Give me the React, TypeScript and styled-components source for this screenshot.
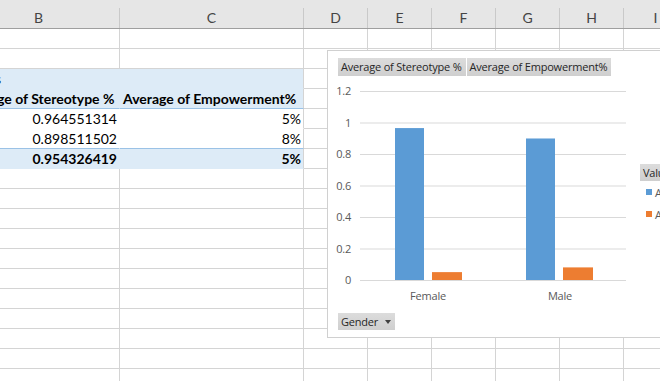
import React from 'react';
import styled, { createGlobalStyle } from 'styled-components';

const GlobalStyle = createGlobalStyle`
  html, body {
    margin: 0;
    padding: 0;
    background: #ffffff;
    overflow: hidden;
  }
  body {
    width: 660px;
    height: 381px;
  }
`;

const GRID = '#d4d4d4';
const PIVOT_BG = '#ddebf7';
const PIVOT_LINE = '#9bc2e6';
const BLUE = '#5b9bd5';
const ORANGE = '#ed7d31';

const columns = [
  { key: 'B', w: 162 },
  { key: 'C', w: 184 },
  { key: 'D', w: 64 },
  { key: 'E', w: 64 },
  { key: 'F', w: 64 },
  { key: 'G', w: 64 },
  { key: 'H', w: 64 },
  { key: 'I', w: 64 },
];

type PivotRow = {
  kind: 'label' | 'head' | 'item' | 'total';
  b: string;
  c: string;
  last?: boolean;
};

const pivot: PivotRow[] = [
  { kind: 'label', b: 'Values', c: '' },
  { kind: 'head', b: 'Average of Stereotype %', c: 'Average of Empowerment%' },
  { kind: 'item', b: '0.964551314', c: '5%' },
  { kind: 'item', b: '0.898511502', c: '8%', last: true },
  { kind: 'total', b: '0.954326419', c: '5%' },
];

const series = [
  { name: 'Average of Stereotype %', color: BLUE },
  { name: 'Average of Empowerment%', color: ORANGE },
];

const categories = [
  { label: 'Female', center: 90, bars: [{ x: 57, w: 29, v: 0.964551314 }, { x: 94, w: 30, v: 0.05 }] },
  { label: 'Male', center: 222, bars: [{ x: 188, w: 29, v: 0.898511502 }, { x: 225, w: 30, v: 0.08 }] },
];

const Page = styled.div`
  position: relative;
  width: 660px;
  height: 381px;
  overflow: hidden;
  font-family: 'Lato', 'Liberation Sans', sans-serif;
`;

const Sheet = styled.div`
  margin-left: -42px;
  width: 760px;
`;

const HeaderBar = styled.div`
  display: flex;
  height: 29px;
  box-sizing: border-box;
  padding-top: 8px;
  background: #e6e6e6;
  border-bottom: 1px solid #9f9f9f;
`;

const ColHead = styled.div<{ $w: number }>`
  flex: 0 0 ${(p) => p.$w}px;
  box-sizing: border-box;
  height: 20px;
  line-height: 20px;
  text-align: center;
  border-right: 1px solid #c9c9c9;
  color: #444444;
  font-size: 14px;
`;

const Row = styled.div`
  display: flex;
`;

const Cell = styled.div<{
  $w: number;
  $bg: string;
  $right: string;
  $bottom: string;
  $align: string;
  $bold?: boolean;
}>`
  flex: 0 0 ${(p) => p.$w}px;
  height: 20px;
  box-sizing: border-box;
  background: ${(p) => p.$bg};
  border-right: 1px solid ${(p) => p.$right};
  border-bottom: 1px solid ${(p) => p.$bottom};
  display: flex;
  align-items: center;
  justify-content: ${(p) => p.$align};
  padding: 0 2px 0 3px;
  font-size: 14px;
  font-weight: ${(p) => (p.$bold ? 700 : 400)};
  color: #000000;
  white-space: nowrap;
  overflow: hidden;
`;

const Chart = styled.div`
  position: absolute;
  left: 327px;
  top: 50px;
  width: 360px;
  height: 288px;
  box-sizing: border-box;
  background: #ffffff;
  border: 1px solid #d0d0d0;
  padding: 7px 0 7px 10px;
  display: flex;
  flex-direction: column;
  font-family: 'Open Sans', 'Liberation Sans', sans-serif;
`;

const FieldRow = styled.div`
  display: flex;
  gap: 1px;
`;

const FieldButton = styled.div<{ $h?: number }>`
  height: ${(p) => p.$h ?? 18}px;
  line-height: ${(p) => p.$h ?? 18}px;
  padding: 0 4px 0 3px;
  background: linear-gradient(#dcdcdc, #cfcfcf);
  color: #262626;
  font-size: 11px;
  letter-spacing: -0.2px;
  white-space: nowrap;
  display: flex;
  align-items: center;
  gap: 7px;
`;

const Caret = styled.span`
  width: 0;
  height: 0;
  border-left: 3.5px solid transparent;
  border-right: 3.5px solid transparent;
  border-top: 4px solid #404040;
  margin-top: 1px;
`;

const Body = styled.div`
  display: flex;
  height: 232px;
`;

const Plot = styled.svg`
  flex: 0 0 296px;
  overflow: visible;
  font-family: 'Open Sans', 'Liberation Sans', sans-serif;
  font-size: 11px;
  letter-spacing: -0.2px;
`;

const Legend = styled.div`
  padding: 88px 0 0 6px;
  display: flex;
  flex-direction: column;
  align-items: flex-start;
`;

const LegendItem = styled.div`
  height: 22px;
  display: flex;
  align-items: center;
  gap: 3px;
  padding-left: 6px;
  color: #595959;
  font-size: 11px;
  white-space: nowrap;
`;

const Swatch = styled.span<{ $c: string }>`
  width: 6px;
  height: 6px;
  background: ${(p) => p.$c};
`;

const FooterRow = styled.div`
  margin-top: 5px;
  display: flex;
`;

function pivotCells(p: PivotRow) {
  const bg = p.kind === 'label' || p.kind === 'head' || p.kind === 'total' ? PIVOT_BG : '#ffffff';
  const bottom = p.kind === 'head' || p.last ? PIVOT_LINE : bg;
  const bold = p.kind === 'head' || p.kind === 'total';
  const numeric = p.kind === 'item' || p.kind === 'total';
  return [
    { text: p.b, bg, right: bg, bottom, bold, align: numeric ? 'flex-end' : 'flex-start' },
    { text: p.c, bg, right: GRID, bottom, bold, align: numeric ? 'flex-end' : 'flex-start' },
  ];
}

const ROWS = 18;
const PIVOT_START = 2;
const Y0 = 204;
const SCALE = 157.5;

const App: React.FC = () => {
  const rows = Array.from({ length: ROWS }, (_, r) => {
    const p = r >= PIVOT_START && r < PIVOT_START + pivot.length ? pivot[r - PIVOT_START] : null;
    const special = p ? pivotCells(p) : [];
    return columns.map((col, i) => {
      const s = special[i];
      return s ? (
        <Cell key={col.key} $w={col.w} $bg={s.bg} $right={s.right} $bottom={s.bottom} $align={s.align} $bold={s.bold}>
          {s.text}
        </Cell>
      ) : (
        <Cell key={col.key} $w={col.w} $bg="#ffffff" $right={GRID} $bottom={GRID} $align="flex-start" />
      );
    });
  });

  const ticks = [0, 0.2, 0.4, 0.6, 0.8, 1, 1.2];

  return (
    <Page>
      <GlobalStyle />
      <Sheet>
        <HeaderBar>
          {columns.map((c) => (
            <ColHead key={c.key} $w={c.w}>
              {c.key}
            </ColHead>
          ))}
        </HeaderBar>
        {rows.map((cells, r) => (
          <Row key={r}>{cells}</Row>
        ))}
      </Sheet>

      <Chart>
        <FieldRow>
          {series.map((s) => (
            <FieldButton key={s.name}>{s.name}</FieldButton>
          ))}
        </FieldRow>
        <Body>
          <Plot width={296} height={232} viewBox="0 0 296 232">
            {ticks.map((t) => {
              const y = Y0 - t * SCALE;
              return (
                <g key={t}>
                  <line x1={22} x2={288} y1={y + 0.5} y2={y + 0.5} stroke="#d9d9d9" strokeWidth={1} />
                  <text x={13} y={y + 4} textAnchor="end" fill="#595959">
                    {Number(t.toFixed(1)).toString()}
                  </text>
                </g>
              );
            })}
            {categories.map((c) => (
              <g key={c.label}>
                {c.bars.map((b, i) => (
                  <rect
                    key={i}
                    x={b.x}
                    y={Y0 - b.v * SCALE}
                    width={b.w}
                    height={b.v * SCALE}
                    fill={series[i].color}
                  />
                ))}
                <text x={c.center} y={224} textAnchor="middle" fill="#595959">
                  {c.label}
                </text>
              </g>
            ))}
          </Plot>
          <Legend>
            <FieldButton $h={17}>Values</FieldButton>
            {series.map((s) => (
              <LegendItem key={s.name}>
                <Swatch $c={s.color} />
                {s.name}
              </LegendItem>
            ))}
          </Legend>
        </Body>
        <FooterRow>
          <FieldButton $h={17}>
            Gender
            <Caret />
          </FieldButton>
        </FooterRow>
      </Chart>
    </Page>
  );
};

export default App;
